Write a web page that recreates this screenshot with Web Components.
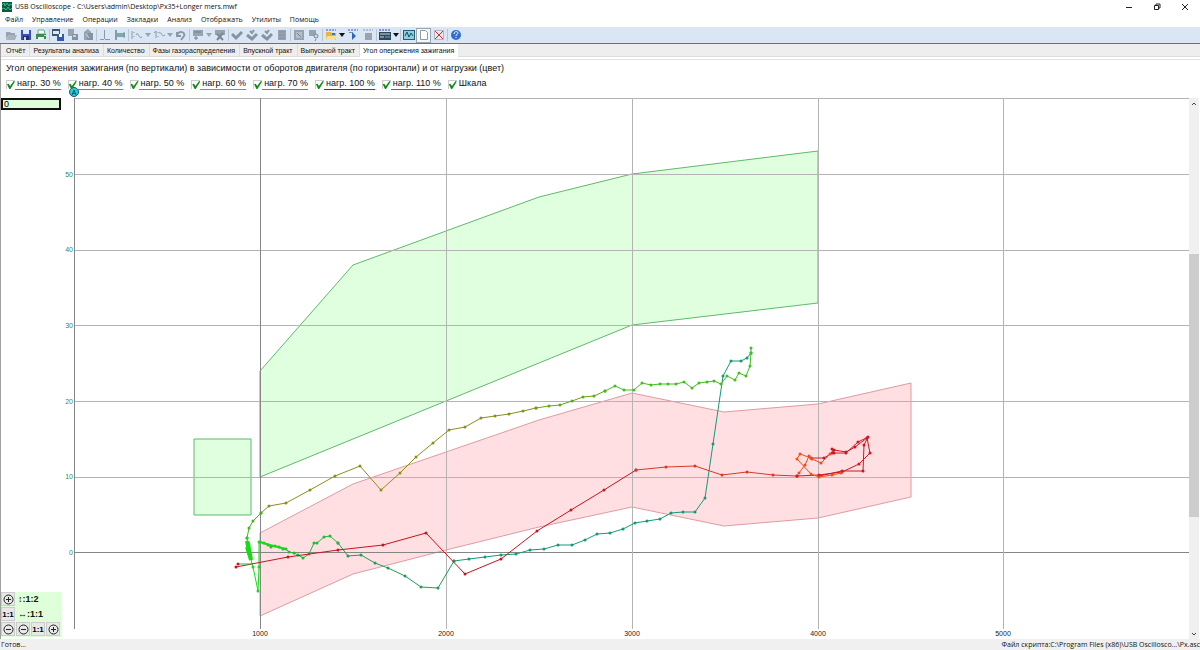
<!DOCTYPE html>
<html lang="ru">

<head>
  <meta charset="UTF-8">
  <meta name="viewport" content="width=device-width, initial-scale=1.0">
  <title>USB Oscilloscope</title>
  <style>
    html,
    body {
      margin: 0;
      height: 100%
    }

    body {
      font-family: "Open Sans", "Liberation Sans", sans-serif;
      color: #111
    }
  </style>
</head>

<body>
  <scope-window>
    <title-bar slot="title">USB Oscilloscope - C:\Users\admin\Desktop\Px35+Longer mers.mwf</title-bar>
    <menu-bar slot="menu" items="Файл,Управление,Операции,Закладки,Анализ,Отображать,Утилиты,Помощь"></menu-bar>
    <tool-bar slot="tools"></tool-bar>
    <tab-bar slot="tabs" active="6"
      items="Отчёт,Результаты анализа,Количество,Фазы газораспределения,Впускной тракт,Выпускной тракт,Угол опережения зажигания"></tab-bar>
    <chart-legend>Угол опережения зажигания (по вертикали) в зависимости от оборотов двигателя (по горизонтали) и от нагрузки (цвет)</chart-legend>
    <chart-area>
      <zoom-panel slot="side"></zoom-panel>
      <advance-chart></advance-chart>
      <scroll-bar slot="scroll"></scroll-bar>
    </chart-area>
    <status-bar slot="status">Готов...<span slot="file">Файл скрипта:C:\Program Files (x86)\USB Oscillosco...\Px.asc</span></status-bar>
  </scope-window>

  <script>
    const define = (name, html) => customElements.define(name, class extends HTMLElement {
      constructor() {
        super().attachShadow({ mode: "open" })
      }
      connectedCallback() {
        this.shadowRoot.innerHTML = typeof html == "function" ? html(this) : html;
      }
    });
    const list = (el) => el.getAttribute("items").split(",");

    define("scope-window",
      `<style>` +
      `  :host{display:flex;flex-direction:column;height:100vh;overflow:hidden;background:#fff}` +
      `  main{flex:1;min-height:0;display:flex;flex-direction:column;border-left:1px solid #a0a0a0}` +
      `</style>` +
      `<slot name="title"></slot><slot name="menu"></slot><slot name="tools"></slot>` +
      `<main><slot name="tabs"></slot><slot></slot></main>` +
      `<slot name="status"></slot>`);

    define("title-bar",
      `<style>` +
      `  :host{display:flex;align-items:center;height:13px;padding:0 1px 0 2px;font-size:7px}` +
      `  .name{flex:1;margin-left:3px;white-space:nowrap}` +
      `  button{width:28px;height:13px;padding:0;border:0;background:none;display:grid;place-items:center}` +
      `  .win{fill:none;stroke:#222}` +
      `</style>` +
      `<svg width="10" height="10"><rect width="10" height="10" fill="#0c5a45"/><path d="M0 3l2-2 1 3 2-3 2 3 1-2 2 1M0 7l2-1 2 2 2-3 2 3 2-2" fill="none" stroke="#39c07d"/></svg>` +
      `<span class="name"><slot></slot></span>` +
      `<button aria-label="Свернуть"><svg class="win" width="8" height="8"><path d="M1 4.500h6"/></svg></button>` +
      `<button aria-label="Восстановить"><svg class="win" width="8" height="8"><path d="M1.500 2.500h4v4h-4zM3 2.500v-1.500h4v4h-1.500"/></svg></button>` +
      `<button aria-label="Закрыть"><svg class="win" width="8" height="8"><path d="M1 1l6 6M7 1l-6 6"/></svg></button>`);

    define("menu-bar", (el) =>
      `<style>` +
      `  :host{display:block;height:14px;font-size:7px;line-height:14px}` +
      `  nav{display:flex;gap:9px;padding-left:5px}` +
      `  button{padding:0;border:0;background:none;font:inherit;color:inherit;white-space:nowrap}` +
      `</style>` +
      `<nav>${list(el).map((t) => `<button>${t}</button>`).join("")}</nav>`);

    // 12x12 glyphs, "g" is the disabled grey
    const g = "#98a3b0";
    const ICONS = {
      open: `<path d="M1 10V3h4l1 1h4v2H4z" fill="${g}"/><path d="M4 6h8l-2 5H1z" fill="#a9b2bb"/>`,
      save: `<path d="M1 1h10v10H1z" fill="#3b50b8"/><path d="M3 1h6v4H3z" fill="#dfe8ff"/><path d="M3 7h6v4H3z" fill="#20306f"/><path d="M4 8h2v3H4z" fill="#cfd8f0"/>`,
      print: `<path d="M3 1h6l1 4H3z" fill="#fff" stroke="#6a8"/><path d="M1 5h10v5H1z" fill="#3b8a55"/><path d="M3 8h6v3H3z" fill="#e6f5e0"/><path d="M9 6h2v1H9z" fill="#c6ff8a"/>`,
      copy: `<path d="M0 0h8v7H0z" fill="#3c5670"/><path d="M1 2h6v3H1z" fill="#dbe9f5"/><path d="M5 5h7v7H5z" fill="#3458b0"/><path d="M7 5h3v3H7z" fill="#fff"/>`,
      copy2: `<path d="M1 0h6v7H1z" fill="${g}"/><path d="M5 5h6v6H5z" fill="#8692a1"/><path d="M6 6h3v2H6z" fill="#c8d2dd"/>`,
      paste: `<path d="M2 3l4-3 3 3v8H2z" fill="${g}"/><path d="M6 4h5v7H5z" fill="#8692a1"/><path d="M4 5l3 4" stroke="#d0dae5"/>`,
      cursor: `<path d="M5.500 1v9M1 10.500h4M6 10.500h5" stroke="#8a98a8" fill="none"/>`,
      ruler: `<path d="M2 1v10" stroke="#7aa0a8" stroke-width="2"/><path d="M3 4h8v4H3z" fill="#7fa7ad"/><path d="M10 3v6" stroke="#6d9aa2"/>`,
      wave: `<path d="M1 2v8M3 3v1M3 7v1M5 6c2-5 3 5 6 2" stroke="#8a98a8" fill="none"/>`,
      wave2: `<path d="M1 4l2-2v7M5 3v1M5 7v1M6 4c3-2 2 5 6 2" stroke="#8a98a8" fill="none"/>`,
      undo: `<path d="M2 3v4h4M2 6c2-5 9-3 7 1l-3 4" stroke="#8a98a8" stroke-width="2" fill="none"/>`,
      screen: `<path d="M1 1h10v6H1z" fill="${g}"/><path d="M2 3h7M2 9h4M4 7v4" stroke="#74808e"/>`,
      screenX: `<path d="M1 1h10v5H1z" fill="${g}"/><path d="M3 5l6 6M9 4l-6 7" stroke="#7c8794" stroke-width="2"/>`,
      check: `<path d="M1 5l4 4 6-6" stroke="#8793a3" stroke-width="3" fill="none"/>`,
      check2: `<path d="M1 6l5 4 5-5" stroke="#8793a3" stroke-width="3" fill="none"/><path d="M4 2l2 2 2-3" stroke="#8793a3" stroke-width="2" fill="none"/>`,
      page: `<path d="M2 1h8v10H2z" fill="${g}"/><path d="M3 3h6M3 6h6M3 9h6" stroke="#8792a0"/>`,
      frame: `<path d="M1 1h10v10H1z" fill="${g}"/><path d="M3 3h6v6H3z" fill="#b4bfcb"/><path d="M4 4l4 4" stroke="#75808e"/>`,
      zoom: `<path d="M1 1h7v6H1z" fill="${g}"/><circle cx="8" cy="7" r="2" fill="#cfd9e4" stroke="#7c8794"/><path d="M8 10l-1 2" stroke="#7c8794"/>`,
      script: `<path d="M1 1h10" stroke="#3b5fc0" stroke-dasharray="2 1"/><path d="M1 3h5l1 1h4v7H1z" fill="#e6b542"/><path d="M2 7h10l-2 4H1z" fill="#ffe190"/><path d="M7 4h3v2H7z" fill="#3572c8"/>`,
      run: `<path d="M1 1h10" stroke="#3b5fc0" stroke-dasharray="2 1"/><path d="M5 3v8l4-4z" fill="#2f66b5"/><path d="M2 3.500h4" stroke="#5b8fce"/>`,
      stop: `<path d="M1 1h10" stroke="#8a98c0" stroke-dasharray="2 1"/><path d="M3 4h7v7H3z" fill="${g}"/>`,
      panel: `<path d="M0 1h12" stroke="#2446a0" stroke-dasharray="2 1"/><path d="M0 3h12v8H0z" fill="#30465a"/><path d="M1 5h10M1 8h4" stroke="#c7dced"/><path d="M6 8h5" stroke="#5ac08a"/>`,
      scope: `<path d="M0 1h12v10H0z" fill="#22607a"/><path d="M1 2h10v8H1z" fill="#8fd0d8"/><path d="M2 7l2-4 2 5 2-4 2 3" stroke="#144a70" fill="none"/>`,
      blank: `<path d="M2.500 1.500h5l2 2v7h-7z" fill="#fff" stroke="#9a9a9a"/>`,
      close: `<path d="M1.500 1.500h9v9h-9z" fill="#eee8ee" stroke="#b9b4bd"/><path d="M2 2l8 8M10 2l-8 8" stroke="#c9343c" stroke-width="1"/>`,
      help: `<circle cx="6" cy="6" r="5" fill="#2f6fd0"/><path d="M4 5c0-3 4-3 4-1 0 1-2 1-2 3M6 8v1" stroke="#fff" fill="none"/>`
    };

    define("tool-bar",
      `<style>` +
      `  :host{display:flex;align-items:center;height:16px;padding-left:3px;background:#dae6f3;border-bottom:1px solid #66737e}` +
      `  button{width:15px;height:15px;padding:0;border:0;background:none;display:grid;place-items:center}` +
      `  button.arrow{width:7px}` +
      `  button.on{background:#f4f7fa;box-shadow:inset 0 0 0 1px #9aa6b2}` +
      `  hr{width:1px;height:12px;margin:0 0 0 1px;border:0;background:#b9c5d1}` +
      `</style>` +
      ("open save print | copy copy2 paste | cursor ruler | wave v wave2 v undo | screen v screenX | check check2 check2 page | " +
        "frame zoom | script V run stop | panel V | scope blank close | help").split(" ").map((id) => {
          if (id == "|") return `<hr>`;
          if (id == "v" || id == "V")
            return `<button class="arrow" aria-label="Список"><svg width="6" height="4"><path d="M0 0h6l-3 4z" fill="${id == "V" ? "#111" : g}"/></svg></button>`;
          return `<button class="${id == "blank" ? "on" : ""}" aria-label="${id}"><svg width="12" height="12">${ICONS[id]}</svg></button>`;
        }).join(""));

    define("tab-bar", (el) =>
      `<style>` +
      `  :host{display:flex;height:12px;padding-left:2px;background:#eee;border-bottom:1px solid #dcdcdc;box-shadow:0 2px #fff,0 3px #e2e2e2;margin-bottom:3px}` +
      `  button{padding:0 4px 0 3px;border:0;border-right:1px solid #ddd;background:none;font:7px/14px "Liberation Sans",sans-serif;color:#111;white-space:nowrap}` +
      `  button.active{height:14px;background:#fff;border:0;line-height:12px}` +
      `</style>` +
      list(el).map((t, i) => `<button role="tab" class="${i == el.getAttribute("active") ? "active" : ""}">${t}</button>`).join(""));

    define("series-toggle", (el) =>
      `<style>` +
      `  :host{display:block;font:9px/11px "Liberation Sans",sans-serif}` +
      `  label{display:flex;align-items:center;white-space:nowrap}` +
      `  input{box-sizing:border-box;appearance:none;width:9px;height:9px;margin:1px 0 0;border:solid #ccc;border-width:1px 0 0 1px}` +
      `  input:checked::before{content:"";display:block;width:8px;height:8px;background:#128a1c;` +
      `    clip-path:polygon(0 40%,20% 35%,38% 62%,85% 0,100% 5%,42% 100%,28% 100%)}` +
      `  span{padding:0 0 0 2px;border-bottom:1px solid ${el.getAttribute("color")}}` +
      `</style>` +
      `<label><input type="checkbox" checked><span><slot></slot></span></label>`);

    define("chart-legend",
      `<style>` +
      `  :host{display:block;padding:2px 5px 0;font:9px/12px "Liberation Sans",sans-serif}` +
      `  p{margin:0 0 4px;white-space:nowrap}` +
      `  div{display:flex;gap:7px}` +
      `</style>` +
      `<p><slot></slot></p><div>` +
      [["нагр. 30 %", "#0a9a80"], ["нагр. 40 %", "#10b858"], ["нагр. 50 %", "#10cc30"], ["нагр. 60 %", "#30cc10"],
      ["нагр. 70 %", "#8a8a00"], ["нагр. 100 %", "#e00010"], ["нагр. 110 %", "#f03010"], ["Шкала", "transparent"]]
        .map(([t, c]) => `<series-toggle color="${c}">${t}</series-toggle>`).join("") +
      `</div>`);

    define("chart-area",
      `<style>` +
      `  :host{flex:1;min-height:0;display:flex;margin-top:8px}` +
      `</style>` +
      `<slot name="side"></slot><slot></slot><slot name="scroll"></slot>`);

    const ring = (plus) => `<svg width="11" height="11" fill="none" stroke="#222"><circle cx="5.500" cy="5.500" r="4.500"/><path d="M3 5.500h5${plus ? "M5.500 3v5" : ""}"/></svg>`;
    define("zoom-panel",
      `<style>` +
      `  :host{display:flex;flex-direction:column;justify-content:space-between;width:61px;font:bold 9px "Liberation Sans",sans-serif;color:#111}` +
      `  input{box-sizing:border-box;width:60px;height:12px;padding:0 1px;border:2px solid #111;background:#dfffdb;font:9px "Liberation Sans",sans-serif}` +
      `  .grid{display:grid;grid-template-columns:repeat(4,15px);grid-auto-rows:15px;background:#dfffdb;margin-bottom:2px}` +
      `  button{box-sizing:border-box;padding:0;margin:0 1px 1px 0;border:1px solid #ccc;background:#e8e8e8;font:inherit;font-size:8px;display:grid;place-items:center}` +
      `  output{grid-column:span 3;line-height:15px;padding-left:2px;white-space:nowrap}` +
      `</style>` +
      `<input value="0" aria-label="Значение">` +
      `<div class="grid">` +
      `<button aria-label="Крупнее">${ring(1)}</button><output>↕:1:2</output>` +
      `<button>1:1</button><output>↔:1:1</output>` +
      `<button aria-label="Мельче">${ring()}</button><button aria-label="Мельче">${ring()}</button><button>1:1</button><button aria-label="Крупнее">${ring(1)}</button>` +
      `</div>`);

    define("scroll-bar",
      `<style>` +
      `  :host{display:flex;flex-direction:column;width:10px;margin-right:1px;background:#f0f0f0}` +
      `  button{height:11px;padding:0;border:0;background:none;display:grid;place-items:center}` +
      `  svg{fill:none;stroke:#444}` +
      `  .before{flex:145}` +
      `  .thumb{flex:262;background:#cdcdcd}` +
      `  .after{flex:111}` +
      `</style>` +
      `<button aria-label="Вверх"><svg width="6" height="4"><path d="M1 3l2-2 2 2"/></svg></button>` +
      `<div class="before"></div><div class="thumb"></div><div class="after"></div>` +
      `<button aria-label="Вниз"><svg width="6" height="4"><path d="M1 1l2 2 2-2"/></svg></button>`);

    define("status-bar",
      `<style>` +
      `  :host{display:flex;justify-content:space-between;height:11px;padding:0 0 0 1px;background:#f0f0f0;font-size:7px;line-height:12px;white-space:nowrap}` +
      `</style>` +
      `<span><slot></slot></span><slot name="file"></slot>`);

    // x,y pairs on the canvas of the log window; origin is its top left corner
    const GREEN_ZONES = [
      "260,371 353,265 539,197 632,174 818,151 818,303 632,325 446,401 260,477",
      "194,439 251,439 251,515 194,515"
    ];
    const RED_ZONE = "260,533 353,484 539,420 632,393 724,412 818,404 911,383 911,497 818,518 724,526 632,507 539,527 446,550 353,574 260,616";
    const TRACES = [
      ["#139a78", "454,561 469,559 485,557 501,555 516,554 530,550 544,549 558,545 572,545 585,540 597,534 610,533 623,529 635,523 647,521 660,519 671,513 683,512 695,512 705,498 713,444 723,376 731,361 741,361 747,358 751,353"],
      ["#1e9e58", "338,543 348,556 361,555 375,563 388,568 405,576 421,587 438,588 454,561"],
      ["#1fb93c", "260,542 264,543 268,545 271,547 275,546 279,547 283,549 286,549 289,552 294,553 298,555 303,558 309,554 314,543 317,543 324,537 330,536 338,543"],
      ["#40c01c", "751,348 751,353 750,366 746,376 739,373 735,380 727,376 721,384 714,381 707,382 699,383 692,388 684,382 676,384 668,384 660,384 651,385 642,383 634,390 624,390 615,386 605,391"],
      ["#62a818", "605,391 594,396 583,397 572,401 560,405 549,406 536,408"],
      ["#89901a", "536,408 523,411 509,414 495,416 481,418 465,427 449,430 433,443 416,457 400,473 381,490 360,466 335,476 310,490 286,503 269,506 261,513"],
      ["#45b51c", "261,513 253,521 249,528 247,538"],
      ["#15dc15", "247,538 248,546 250,556 253,567 258,591 259,567 259,542"],
      ["#c61420", "236,567 288,557 338,550 383,545 426,533 465,574 501,559 537,531 571,510 604,490 636,470"],
      ["#d43a28", "636,470 666,467 695,466 722,475 747,472 773,475 797,476"],
      ["#d01520", "797,476 819,475 842,472 859,464 870,453 867,438 855,447 846,452 834,450 832,453 824,458 811,458"],
      ["#c81824", "819,476 842,471 863,471 864,445 868,437 858,442 846,453 834,453 832,449"],
      ["#f05018", "811,458 800,454 797,459 811,474 819,477 832,475 841,473"],
      ["#ee4a1c", "799,473 805,465 809,456 812,459 821,463 830,454"]
    ];

    const hline = (y, c = "#b4b4b4") => `<line x1="12" x2="100%" y1="${y - 98}" y2="${y - 98}" stroke="${c}"/>`;
    const vline = (x, c = "#b4b4b4") => `<line x1="${x}" x2="${x}" y1="98" y2="629" stroke="${c}"/>`;
    const trace = ([c, pts]) => `<polyline points="${pts}" fill="none" stroke="${c}"/>` +
      pts.split(" ").map((p) => p.split(",")).map(([x, y]) => `<circle cx="${x}" cy="${y}" r="1.500" fill="${c}"/>`).join("");

    define("advance-chart",
      `<style>` +
      `  :host{flex:1;min-width:0;display:flex}` +
      `  svg{flex:1;min-width:0;overflow:visible;font:7px "Liberation Sans",sans-serif}` +
      `  line{shape-rendering:crispEdges}` +
      `  .y{fill:#2c8a68;text-anchor:end}` +
      `  .x{fill:#222;text-anchor:middle}` +
      `</style>` +
      `<svg role="img" aria-label="Угол опережения зажигания"><g transform="translate(-62 -98)">` +
      GREEN_ZONES.map((p) => `<polygon points="${p}" fill="#dfffdf" stroke="#5fb96a"/>`).join("") +
      `<polygon points="${RED_ZONE}" fill="#ffdfe1" stroke="#e09aa2"/></g>` +
      [98, 174, 250, 325, 401, 477].map((y) => hline(y)).join("") + hline(552, "#858585") +
      `<g transform="translate(-62 -98)">` +
      [446, 632, 818, 1003].map((x) => vline(x)).join("") + vline(74, "#858585") + vline(260, "#858585") +
      TRACES.map(trace).join("") +
      `<polyline points="247,541 250,557 248,543 251,560 247,547" fill="none" stroke="#15dc15" stroke-width="4"/>` +
      `<polyline points="260,542 270,545 286,549" fill="none" stroke="#15dc15" stroke-width="2"/>` +
      `<polyline points="252,564 238,564" fill="none" stroke="#1fb93c"/><circle cx="238" cy="564" r="1.500" fill="#c61420"/>` +
      [50, 40, 30, 20, 10, 0].map((n, i) => `<text class="y" x="73" y="${[177, 252, 328, 404, 479, 555][i]}">${n}</text>`).join("") +
      [1000, 2000, 3000, 4000, 5000].map((n, i) => `<text class="x" x="${[260, 446, 632, 818, 1003][i]}" y="636">${n}</text>`).join("") +
      `<circle cx="74" cy="92" r="4.500" fill="#20d0e0" stroke="#145a70"/><text class="x" x="74" y="95">A</text>` +
      `</g></svg>`);
  </script>
</body>

</html>
